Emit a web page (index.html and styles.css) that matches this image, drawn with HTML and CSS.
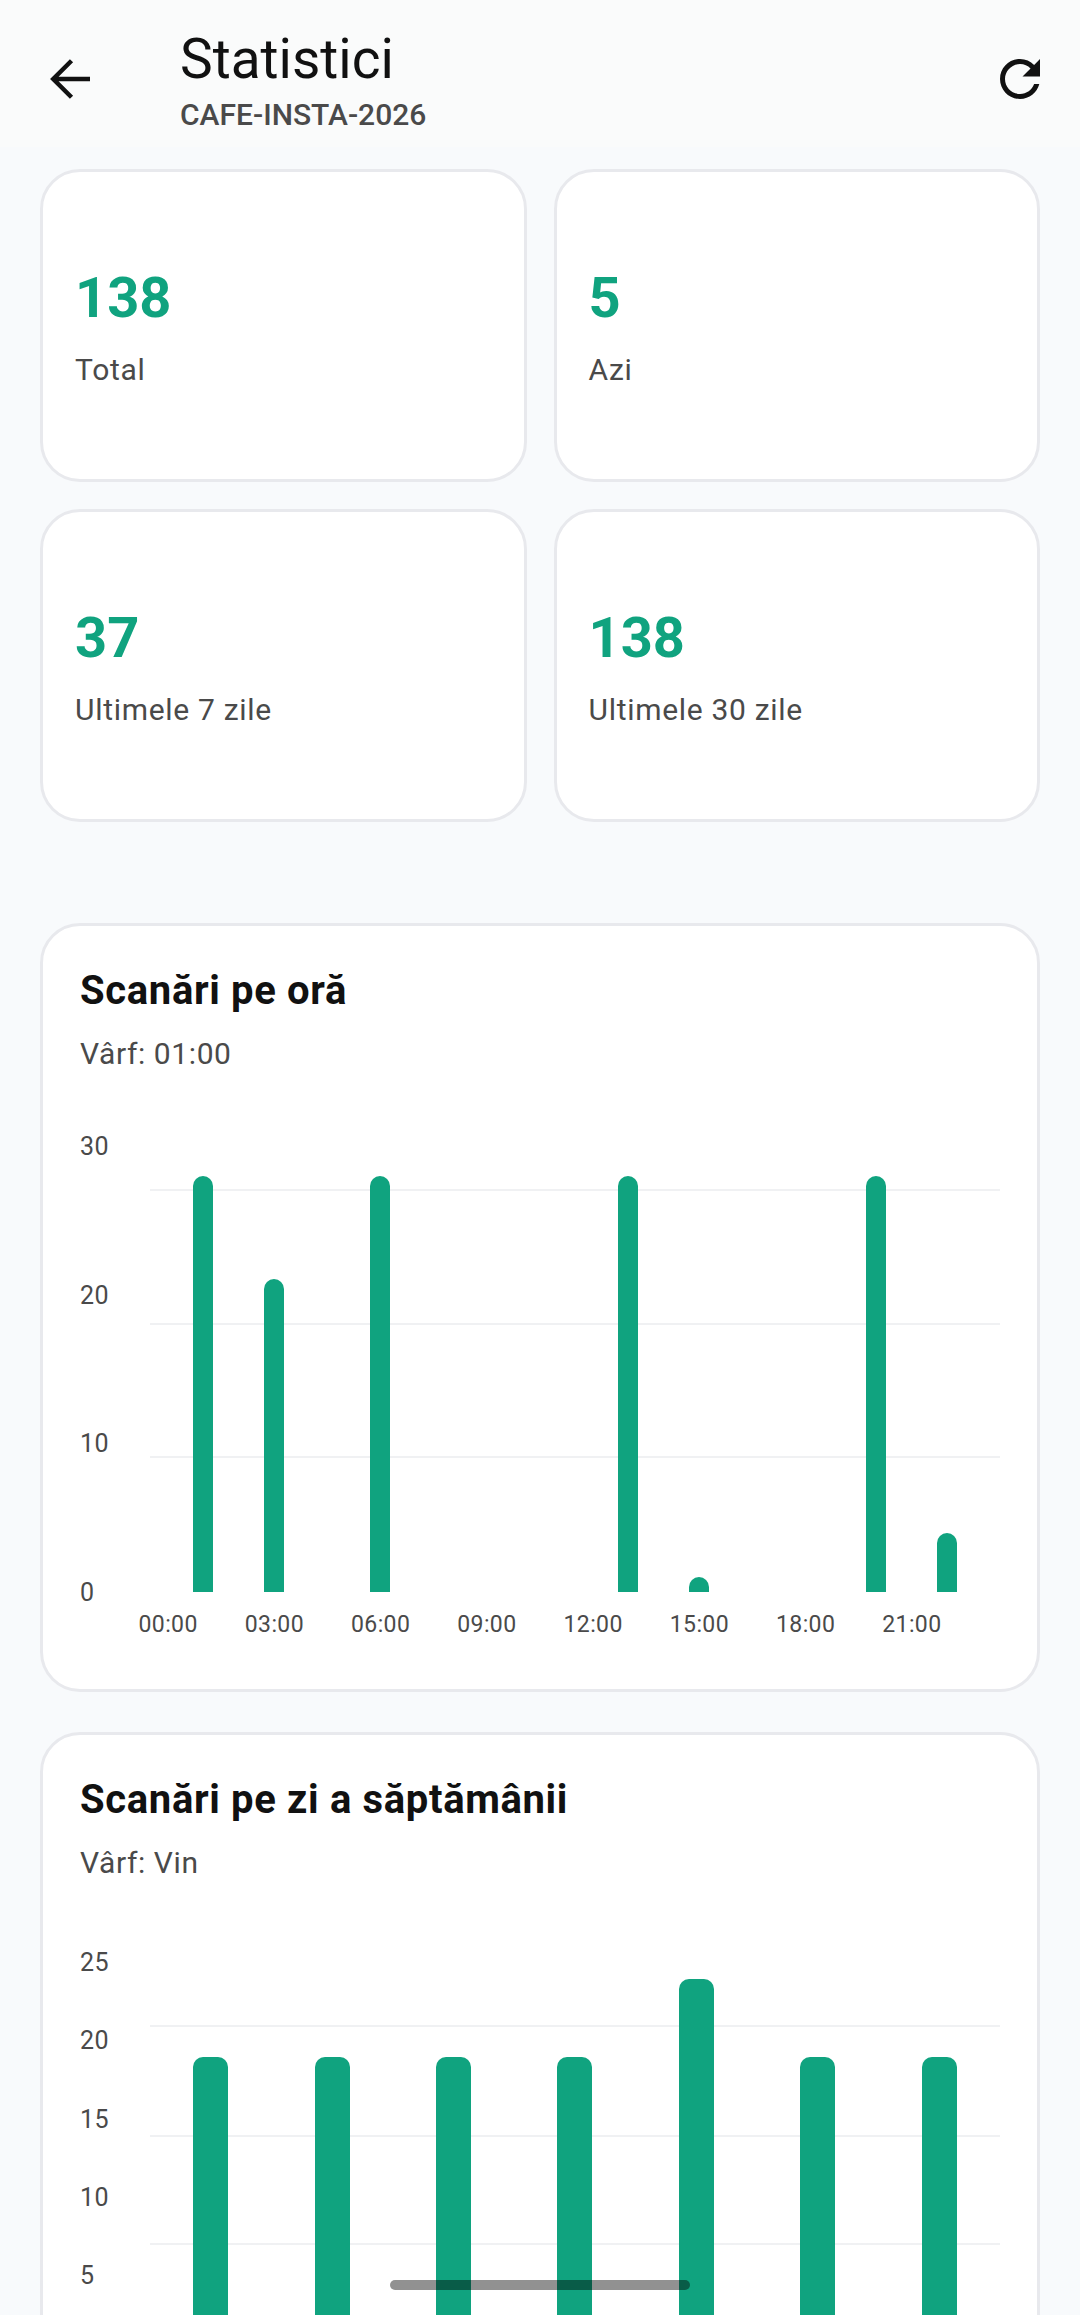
FILE: index.html
```html
<!DOCTYPE html>
<html lang="ro">
<head>
<meta charset="UTF-8">
<title>Statistici</title>
<link rel="stylesheet" href="styles.css">
</head>
<body>

<header class="topbar">
  <svg class="icon back" viewBox="0 0 24 24"><path d="M20 12H5.4M12.6 4.7 5.3 12l7.3 7.3"/></svg>
  <div class="heading">
    <div class="title">Statistici</div>
    <div class="code">CAFE-INSTA-2026</div>
  </div>
  <svg class="icon refresh" viewBox="0 0 24 24"><path d="M17.65 6.35C16.2 4.9 14.21 4 12 4c-4.42 0-7.99 3.58-7.99 8s3.57 8 7.99 8c3.73 0 6.84-2.55 7.73-6h-2.08c-.82 2.33-3.04 4-5.65 4-3.31 0-6-2.69-6-6s2.69-6 6-6c1.66 0 3.14.69 4.22 1.78L13 11h7V4l-2.35 2.35z"/></svg>
</header>

<main class="content">
  <section class="stats">
    <div class="stat"><div class="stat-value">138</div><div class="stat-label">Total</div></div>
    <div class="stat"><div class="stat-value">5</div><div class="stat-label">Azi</div></div>
    <div class="stat"><div class="stat-value">37</div><div class="stat-label">Ultimele 7 zile</div></div>
    <div class="stat"><div class="stat-value">138</div><div class="stat-label">Ultimele 30 zile</div></div>
  </section>

  <section class="chart chart-hours">
    <h2 class="chart-title">Scanări pe oră</h2>
    <div class="chart-sub">Vârf: 01:00</div>
    <div class="chart-body">
      <div class="y-axis">
        <span>30</span><span>20</span><span>10</span><span>0</span>
      </div>
      <div class="plot">
        <i class="gridline" style="top:59px"></i>
        <i class="gridline" style="top:193px"></i>
        <i class="gridline" style="top:326px"></i>
        <div class="bars">
          <div class="bar" style="grid-column:2;height:416px"></div>
          <div class="bar" style="grid-column:4;height:313px"></div>
          <div class="bar" style="grid-column:7;height:416px"></div>
          <div class="bar" style="grid-column:14;height:416px"></div>
          <div class="bar" style="grid-column:16;height:15px"></div>
          <div class="bar" style="grid-column:21;height:416px"></div>
          <div class="bar" style="grid-column:23;height:59px"></div>
        </div>
      </div>
    </div>
    <div class="x-axis">
      <span>00:00</span><span>03:00</span><span>06:00</span><span>09:00</span>
      <span>12:00</span><span>15:00</span><span>18:00</span><span>21:00</span>
    </div>
  </section>

  <section class="chart chart-days">
    <h2 class="chart-title">Scanări pe zi a săptămânii</h2>
    <div class="chart-sub">Vârf: Vin</div>
    <div class="chart-body">
      <div class="y-axis">
        <span>25</span><span>20</span><span>15</span><span>10</span><span>5</span>
      </div>
      <div class="plot">
        <i class="gridline" style="top:77px"></i>
        <i class="gridline" style="top:187px"></i>
        <i class="gridline" style="top:295px"></i>
        <div class="bars">
          <div class="bar" style="grid-column:1;height:404px"></div>
          <div class="bar" style="grid-column:2;height:404px"></div>
          <div class="bar" style="grid-column:3;height:404px"></div>
          <div class="bar" style="grid-column:4;height:404px"></div>
          <div class="bar" style="grid-column:5;height:482px"></div>
          <div class="bar" style="grid-column:6;height:404px"></div>
          <div class="bar" style="grid-column:7;height:404px"></div>
        </div>
      </div>
    </div>
  </section>
</main>

<div class="home-indicator"></div>

</body>
</html>
```

FILE: styles.css
```css
html, body {
	margin: 0;
	height: 2315px;
	overflow: hidden;
}
body {
	background: #f8fafc;
	color: #111;
	font-family: Roboto, "Liberation Sans", sans-serif;
}

/* top bar */
.topbar {
	display: flex;
	align-items: flex-start;
	height: 147px;
	background: #fafbfb;
}
.icon {
	width: 60px;
	height: 60px;
	margin-top: 49px;
	fill: #111;
	flex: none;
}
.back {
	margin-left: 40px;
	fill: none;
	stroke: #111;
	stroke-width: 1.8;
}
.refresh {
	margin-left: auto;
	margin-right: 30px;
}
.heading {
	margin-left: 80px;
	padding-top: 26px;
}
.title {
	font-size: 55px;
	line-height: 66px;
}
.code {
	font-size: 30px;
	font-weight: 500;
	line-height: 38px;
	color: #4a4a4a;
	margin-top: 4px;
}

.content {
	padding: 22px 40px 0;
}

/* stat cards */
.stats {
	display: grid;
	grid-template-columns: 1fr 1fr;
	gap: 27px;
}
.stat {
	display: flex;
	flex-direction: column;
	justify-content: center;
	box-sizing: border-box;
	height: 313px;
	padding: 3px 32px 0;
	background: #fff;
	border: 3px solid #e8e9ed;
	border-radius: 40px;
}
.stat-value {
	font-size: 56px;
	font-weight: 700;
	line-height: 66px;
	color: #10a37f;
}
.stat-label {
	font-size: 30px;
	line-height: 38px;
	letter-spacing: .7px;
	color: #4a4a4a;
	margin-top: 20px;
}

/* chart cards */
.chart {
	box-sizing: border-box;
	margin-top: 40px;
	padding: 41px 37px 49px;
	background: #fff;
	border: 3px solid #e8e9ed;
	border-radius: 40px;
}
.chart-hours {
	margin-top: 101px;
}
.chart-title {
	margin: 0;
	font-size: 40px;
	font-weight: 700;
	line-height: 48px;
	letter-spacing: .65px;
}
.chart-sub {
	margin-top: 20px;
	font-size: 30px;
	line-height: 38px;
	letter-spacing: .6px;
	color: #4a4a4a;
}
.chart-body {
	display: flex;
	align-items: flex-start;
	margin-top: 57px;
}
.chart-days .chart-body {
	margin-top: 66px;
}
.y-axis {
	display: flex;
	flex-direction: column;
	justify-content: space-between;
	flex: none;
	width: 70px;
	height: 476px;
	margin-top: 2px;
	font-size: 25px;
	line-height: 30px;
	letter-spacing: .4px;
	color: #4a4a4a;
}
.chart-days .y-axis {
	height: 343px;
	margin-top: 0;
}
.plot {
	position: relative;
	flex: 1;
	height: 462px;
}
.chart-days .plot {
	height: 513px;
}
.gridline {
	position: absolute;
	left: 0;
	right: 0;
	height: 2px;
	background: #f0f1f3;
}
.bars {
	position: relative;
	display: grid;
	grid-template-columns: repeat(24, 1fr);
	align-items: end;
	height: 100%;
}
.chart-days .bars {
	grid-template-columns: repeat(7, 1fr);
}
.bar {
	grid-row: 1;
	justify-self: center;
	width: 20px;
	background: #10a37f;
	border-radius: 10px 10px 0 0;
}
.chart-days .bar {
	width: 35px;
}
.x-axis {
	display: grid;
	grid-template-columns: repeat(8, 1fr);
	width: 850px;
	margin: 2px 0 0 35px;
	font-size: 23px;
	line-height: 30px;
	letter-spacing: .4px;
	color: #4a4a4a;
	text-align: center;
}

.home-indicator {
	position: fixed;
	left: 390px;
	top: 2280px;
	width: 300px;
	height: 10px;
	border-radius: 5px;
	background: rgba(0, 0, 0, .43);
}
```
